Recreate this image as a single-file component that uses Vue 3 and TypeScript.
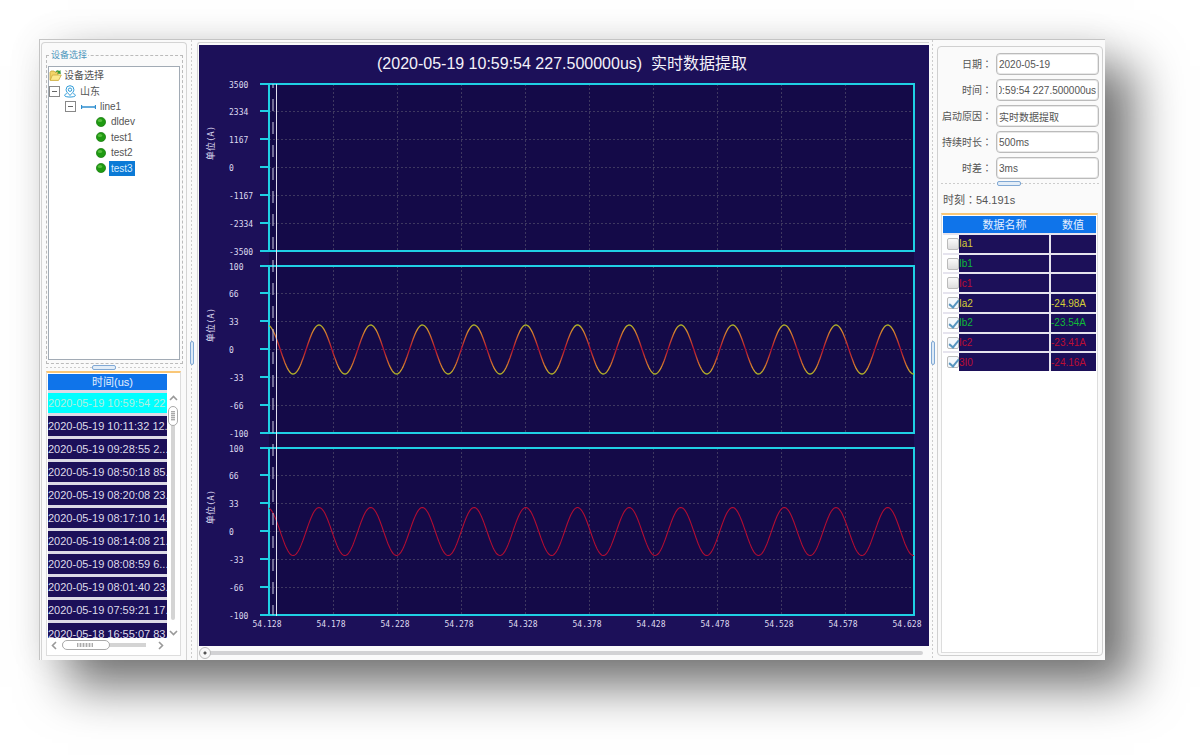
<script setup lang="ts">
import { onMounted, ref } from 'vue'

interface Axis {
  top: number
  labels: string[]
}

interface Channel {
  name: string
  value: string
  on: boolean
  tone: string
}

const devices = ['dldev', 'test1', 'test2', 'test3']
const selectedDevice = ref('test3')

const times = [
  '2020-05-19 10:59:54 22',
  '2020-05-19 10:11:32 12.',
  '2020-05-19 09:28:55 2...',
  '2020-05-19 08:50:18 85.',
  '2020-05-19 08:20:08 23.',
  '2020-05-19 08:17:10 14.',
  '2020-05-19 08:14:08 21.',
  '2020-05-19 08:08:59 6...',
  '2020-05-19 08:01:40 23.',
  '2020-05-19 07:59:21 17.',
  '2020-05-18 16:55:07 83.',
]
const activeTime = ref(0)

const fields = ref([
  { id: 'date', label: '日期', value: '2020-05-19' },
  { id: 'time', label: '时间', value: '10:59:54 227.500000us' },
  { id: 'cause', label: '启动原因', value: '实时数据提取' },
  { id: 'duration', label: '持续时长', value: '500ms' },
  { id: 'offset', label: '时差', value: '3ms' },
])

const channels = ref<Channel[]>([
  { name: 'Ia1', value: '', on: false, tone: 'yellow' },
  { name: 'Ib1', value: '', on: false, tone: 'green' },
  { name: 'Ic1', value: '', on: false, tone: 'red' },
  { name: 'Ia2', value: '-24.98A', on: true, tone: 'yellow' },
  { name: 'Ib2', value: '-23.54A', on: true, tone: 'green' },
  { name: 'Ic2', value: '-23.41A', on: true, tone: 'red' },
  { name: '3I0', value: '-24.16A', on: true, tone: 'red' },
])

const title = '(2020-05-19 10:59:54 227.500000us)  实时数据提取'

const LEFT = 70
const RIGHT = 715
const HEIGHT = 167
const tickOffsets = [0, 27, 55, 83, 111, 139, 167]

const axes: Axis[] = [
  { top: 39, labels: ['3500', '2334', '1167', '0', '-1167', '-2334', '-3500'] },
  { top: 221, labels: ['100', '66', '33', '0', '-33', '-66', '-100'] },
  { top: 403, labels: ['100', '66', '33', '0', '-33', '-66', '-100'] },
]

const gridX = Array.from({ length: 9 }, (_, i) => Math.round(LEFT + (i + 1) * 64) + 0.5)
const xLabels = Array.from({ length: 11 }, (_, i) => ({
  x: 68 + i * 64,
  text: (54.128 + i * 0.05).toFixed(3),
}))

function wave(mid: number, amp: number): string {
  const points: string[] = []
  for (let x = LEFT; x <= RIGHT; x++) {
    const y = mid - amp * Math.cos((2 * Math.PI * (x - 120)) / 51.7)
    points.push(`${x},${y.toFixed(1)}`)
  }
  return points.join(' ')
}

const wave2 = wave(304.5, 24.5)
const wave3 = wave(486.5, 24)
const position = ref(0)

onMounted(() => {
  const el = document.getElementById('time')
  if (el) el.scrollLeft = el.scrollWidth
})
</script>

<template>
  <div class="stage">
    <main class="window">
      <aside class="left">
        <fieldset class="devices">
          <legend>设备选择</legend>
          <div class="tree-box">
            <ul class="tree">
              <li>
                <svg class="ic-folder" width="13" height="13" viewBox="0 0 13 13">
                  <path d="M1 3.5 L2 2 H5 L6 3.2 H9 V11 H1Z" fill="#f2d468" stroke="#c7a437" stroke-width=".8" />
                  <path d="M1.2 11.4 L3.4 6 H12.3 L9.6 11.4Z" fill="#fbe98f" stroke="#cbaa3e" stroke-width=".8" />
                  <path d="M6.3 3.4 C7 1.2 9 .8 10.2 2 L11.4 1 L11.8 5 L8 4.6 L9.2 3.4 C8.4 2.6 7.4 2.8 6.3 3.4Z" fill="#3a9a32" />
                </svg>
                <span>设备选择</span>
              </li>
              <li>
                <span class="fold"></span>
                <svg class="ic-pin" width="12" height="13" viewBox="0 0 12 13" fill="none" stroke="#2f9bd8">
                  <path d="M6 10.4 C3.4 8 2.1 6.3 2.1 4.6 A3.9 3.9 0 0 1 9.9 4.6 C9.9 6.3 8.6 8 6 10.4Z" />
                  <circle cx="6" cy="4.7" r="1.7" />
                  <path d="M2.8 8.6 C1.4 9 .6 9.7 .6 10.4 C.6 12.6 11.4 12.6 11.4 10.4 C11.4 9.7 10.6 9 9.2 8.6" />
                </svg>
                <span>山东</span>
              </li>
              <li class="lv1">
                <span class="fold"></span>
                <svg class="ic-line" width="15" height="6" viewBox="0 0 15 6" stroke="#2f8fd0">
                  <path d="M.5 1 V5 M14.5 1 V5 M.5 3 H14.5" fill="none" stroke-width="1.3" />
                </svg>
                <span>line1</span>
              </li>
              <li v-for="d in devices" :key="d" class="lv2">
                <svg width="10" height="10" viewBox="0 0 10 10">
                  <circle cx="5" cy="5" r="4.6" fill="#1f9a12" stroke="#157a0d" stroke-width=".7" />
                  <ellipse cx="4" cy="3.4" rx="2.2" ry="1.5" fill="#55bd3c" />
                </svg>
                <button type="button" :class="{ picked: d === selectedDevice }" @click="selectedDevice = d">{{ d }}</button>
              </li>
            </ul>
          </div>
        </fieldset>
        <div class="hsplit"><i></i></div>
        <section class="times">
          <div class="times-main">
            <div class="times-view">
              <table>
                <thead>
                  <tr><th>时间(us)</th></tr>
                </thead>
                <tbody>
                  <tr v-for="(t, i) in times" :key="t" :class="{ active: i === activeTime }" @click="activeTime = i">
                    <td>{{ t }}</td>
                  </tr>
                </tbody>
              </table>
            </div>
            <div class="vbar">
              <svg width="9" height="6" viewBox="0 0 9 6"><path d="M1 5 L4.5 1.5 L8 5" fill="none" stroke="#999" stroke-width="1.6" /></svg>
              <div class="vtrack"><i></i></div>
              <svg width="9" height="6" viewBox="0 0 9 6"><path d="M1 1 L4.5 4.5 L8 1" fill="none" stroke="#999" stroke-width="1.6" /></svg>
            </div>
          </div>
          <div class="hbar">
            <svg width="6" height="9" viewBox="0 0 6 9"><path d="M5 1 L1.5 4.5 L5 8" fill="none" stroke="#999" stroke-width="1.6" /></svg>
            <div class="htrack"><i></i></div>
            <svg width="6" height="9" viewBox="0 0 6 9"><path d="M1 1 L4.5 4.5 L1 8" fill="none" stroke="#999" stroke-width="1.6" /></svg>
          </div>
        </section>
      </aside>

      <div class="vsplit"><i></i></div>

      <section class="center">
        <div class="chart">
          <svg viewBox="0 0 730 601">
            <defs>
              <linearGradient id="mix" gradientUnits="userSpaceOnUse" x1="0" y1="280" x2="0" y2="329">
                <stop offset="0" stop-color="#a9b428" />
                <stop offset=".1" stop-color="#d8922c" />
                <stop offset=".3" stop-color="#cc4c2c" />
                <stop offset=".5" stop-color="#b30f30" />
                <stop offset=".7" stop-color="#cc4c2c" />
                <stop offset=".9" stop-color="#d8922c" />
                <stop offset="1" stop-color="#a9b428" />
              </linearGradient>
            </defs>
            <text class="title" x="178" y="24">{{ title }}</text>
            <rect x="70" y="39" width="645" height="531" fill="#140a48" />
            <g v-for="(a, n) in axes" :key="n">
              <g class="grid">
                <path v-for="x in gridX" :key="x" :d="`M${x} ${a.top} V${a.top + HEIGHT}`" />
                <path v-for="t in tickOffsets.slice(1, 6)" :key="t" :d="`M70 ${a.top + t + 0.5} H715`" />
              </g>
              <g class="frame">
                <path :d="`M61 ${a.top} H715 V${a.top + HEIGHT} H61 M70 ${a.top} V${a.top + HEIGHT}`" />
                <path v-for="t in tickOffsets.slice(1, 6)" :key="t" :d="`M61 ${a.top + t} H70`" />
              </g>
              <text v-for="(l, i) in a.labels" :key="i" class="tick" x="30" :y="a.top + (tickOffsets[i] ?? 0) + 4">{{ l }}</text>
              <text class="unit" text-anchor="middle" :transform="`translate(15 ${a.top + 59}) rotate(-90)`">单位(A)</text>
            </g>
            <polyline :points="wave2" fill="none" stroke="url(#mix)" stroke-width="1.3" />
            <polyline :points="wave3" fill="none" stroke="#b00d33" stroke-width="1.1" />
            <path d="M74 39 V570" fill="none" stroke="#cfcbe4" stroke-dasharray="12 11" stroke-dashoffset="8" />
            <path d="M77.5 39 V571" fill="none" stroke="#e2e0f0" />
            <text v-for="l in xLabels" :key="l.text" class="tick" text-anchor="middle" :x="l.x" y="582">{{ l.text }}</text>
          </svg>
        </div>
        <input v-model="position" class="slider" type="range" min="0" max="100" aria-label="position" />
      </section>

      <div class="vsplit narrow"><i></i></div>

      <aside class="right">
        <form class="form" @submit.prevent>
          <template v-for="f in fields" :key="f.id">
            <label :for="f.id">{{ f.label }}<span class="colon">：</span></label>
            <input :id="f.id" v-model="f.value" type="text" />
          </template>
        </form>
        <div class="hsplit"><i></i></div>
        <p class="moment">时刻<span class="colon">：</span>54.191s</p>
        <div class="channels">
          <table>
            <colgroup><col class="c1" /><col /><col class="c3" /></colgroup>
            <thead>
              <tr><th></th><th>数据名称</th><th>数值</th></tr>
            </thead>
            <tbody>
              <tr v-for="c in channels" :key="c.name">
                <td class="check"><input v-model="c.on" type="checkbox" :aria-label="c.name" /></td>
                <td class="name" :class="c.tone">{{ c.name }}</td>
                <td class="value" :class="c.tone">{{ c.value }}</td>
              </tr>
            </tbody>
          </table>
        </div>
      </aside>
    </main>
  </div>
</template>

<style>
body {
  background: #fff;
}
</style>

<style scoped>
* {
  box-sizing: border-box;
}

.stage {
  display: flex;
  height: 100vh;
  min-height: 600px;
  padding: 39px 95px 95px 39px;
  overflow: hidden;
  color: #555;
  font: 10px/15px "Liberation Sans", "Noto Sans CJK SC", sans-serif;
}

.window {
  display: flex;
  flex: 1;
  min-width: 0;
  border-top: 1px solid #c4c4c4;
  border-left: 1px solid #c4c4c4;
  background: #fafafa;
  box-shadow: 29px 27px 46px rgba(0, 0, 0, 0.54), 0 0 36px rgba(0, 0, 0, 0.07);
}

.left {
  display: flex;
  flex-direction: column;
  width: 146px;
  margin: 2px 0 0 1px;
  padding: 5px 3px 4px 4px;
  border: 1px solid #d4d4d4;
  border-bottom: 0;
  border-radius: 4px 4px 0 0;
}

.devices {
  flex: none;
  min-width: 0;
  height: 316px;
  margin: 0;
  padding: 3px 2px 2px 1px;
  border: 1px dashed #bbb;
}

.devices legend {
  height: 15px;
  margin-left: 2px;
  padding: 0 1px;
  color: #4f97bd;
  font-size: 9px;
}

.tree-box {
  height: 294px;
  border: 1px solid #a2abb5;
  background: #fff;
}

.tree {
  display: grid;
  grid-template-rows: repeat(7, 1fr);
  height: 109px;
  margin: 0;
  padding: 1px 0 0;
  list-style: none;
}

.tree li {
  display: flex;
  align-items: center;
  gap: 4px;
}

.tree .ic-folder {
  margin-right: -2px;
}

.tree .lv1 {
  padding-left: 16px;
}

.tree .lv2 {
  gap: 3px;
  padding-left: 47px;
}

.fold {
  position: relative;
  width: 11px;
  height: 11px;
  border: 1px solid #888;
}

.fold::after {
  position: absolute;
  top: 4px;
  left: 2px;
  width: 5px;
  height: 1px;
  background: #666;
  content: "";
}

.lv1 .ic-line {
  margin-left: 1px;
}

.tree button {
  height: 15px;
  padding: 0 2px;
  border: 0;
  background: none;
  color: #555;
  font: inherit;
}

.tree button.picked {
  background: #0b7ad6;
  color: #d5eaff;
}

.hsplit,
.vsplit {
  display: flex;
  flex: none;
  align-items: center;
  justify-content: center;
}

.hsplit {
  height: 7px;
  background: repeating-linear-gradient(90deg, #ccc 0 2px, transparent 2px 4px) 0 50% / 100% 1px no-repeat;
}

.hsplit i {
  width: 24px;
  height: 5px;
  margin-right: 22px;
  border: 1px solid #80a8d4;
  border-radius: 2px;
  background: #e3edf7;
}

.vsplit {
  width: 10px;
  padding-top: 6px;
  background: repeating-linear-gradient(#ccc 0 2px, transparent 2px 4px) 4px 0 / 1px 100% no-repeat;
}

.vsplit i {
  width: 4px;
  height: 24px;
  border: 1px solid #80a8d4;
  border-radius: 2px;
  background: #dce9f6;
}

.vsplit.narrow {
  width: 7px;
  background-position-x: 3px;
}

.times {
  display: flex;
  flex: 1;
  flex-direction: column;
  min-height: 0;
  margin: 0 2px 0 0;
  padding: 1px 1px 3px;
  border: 1px solid #ddd;
  border-top: 2px solid #f9c778;
  background: #fff;
}

.times-main {
  display: flex;
  flex: 1;
  min-height: 0;
}

.times-view {
  flex: 1;
  min-width: 0;
  overflow: hidden;
}

table {
  width: 100%;
  border-collapse: collapse;
  table-layout: fixed;
}

th {
  background: #0f74ea;
  color: #e3efff;
  font-size: 11px;
  font-weight: normal;
}

.times th {
  height: 17px;
  padding: 0 0 0 10px;
  line-height: 16px;
}

.times td {
  height: 23px;
  padding: 0;
  overflow: hidden;
  border-top: 3px solid #dcdae6;
  background: #1c1059;
  color: #dedbea;
  font-size: 11px;
  line-height: 20px;
  white-space: nowrap;
}

.times .active td {
  background: #00ffff;
  color: #b0efe0;
}

.vbar {
  display: flex;
  flex-direction: column;
  align-items: center;
  width: 12px;
  padding: 21px 0 2px;
}

.vtrack {
  flex: 1;
  width: 4px;
  margin: 5px 0 10px;
  border-radius: 2px;
  background: #d4d4d4;
}

.vtrack i {
  display: block;
  width: 10px;
  height: 20px;
  margin-left: -3px;
  border: 1px solid #aaa;
  border-radius: 5px;
  background: repeating-linear-gradient(#aaa 0 1px, #ddd 1px 2px) 50% 50% / 4px 10px no-repeat #fff;
}

.hbar {
  display: flex;
  align-items: center;
  height: 14px;
  margin-right: 12px;
  padding: 0 3px;
}

.htrack {
  display: flex;
  flex: 1;
  align-items: center;
  height: 4px;
  margin: 0 12px 0 5px;
  background: #d4d4d4;
}

.htrack i {
  width: 48px;
  height: 10px;
  border: 1px solid #aaa;
  border-radius: 5px;
  background: repeating-linear-gradient(90deg, #aaa 0 1px, #ddd 1px 3px) 45% 50% / 16px 4px no-repeat #fff;
}

.center {
  display: flex;
  flex: 1;
  flex-direction: column;
  min-width: 0;
  margin-top: 2px;
  padding: 2px 0 0 1px;
  border-top: 1px solid #d4d4d4;
  border-left: 1px solid #d4d4d4;
  border-radius: 3px 0 0;
}

.chart {
  flex: 1;
  min-height: 0;
  background: #1c1059;
}

.chart svg {
  display: block;
  width: 100%;
  height: 100%;
}

.title {
  fill: #f4f2fa;
  font-size: 16px;
  white-space: pre;
}

.tick {
  fill: #dedaf0;
  font-family: "DejaVu Sans Mono", monospace;
  font-size: 8px;
}

.unit {
  fill: #dedaf0;
  font-family: "DejaVu Sans Mono", "Noto Sans CJK SC", monospace;
  font-size: 9px;
}

.grid path {
  fill: none;
  stroke: #3e3860;
  stroke-dasharray: 2 2;
}

.frame path {
  fill: none;
  stroke: #1fd0e4;
  stroke-width: 2;
}

.slider {
  flex: none;
  width: 100%;
  height: 14px;
  margin: 0;
  padding-right: 6px;
  appearance: none;
  background: none;
}

.slider::-webkit-slider-runnable-track {
  height: 4px;
  border-radius: 2px;
  background: #d2d2d4;
}

.slider::-webkit-slider-thumb {
  width: 12px;
  height: 12px;
  margin-top: -4px;
  border: 1px solid #bbb;
  border-radius: 6px;
  appearance: none;
  background: radial-gradient(circle, #555 0 1px, #f8f8f8 2px);
}

.right {
  display: flex;
  flex: none;
  flex-direction: column;
  width: 166px;
  margin: 6px 2px 4px 1px;
  padding: 6px 3px 2px;
  border: 1px solid #d0d0d0;
  border-radius: 4px;
}

.form {
  display: grid;
  grid-template-columns: 51px 1fr;
  gap: 4px;
  align-items: center;
}

.form label {
  text-align: right;
  white-space: nowrap;
}

.colon {
  font-family: "Noto Sans CJK TC", sans-serif;
}

.form input {
  width: 100%;
  min-width: 0;
  height: 22px;
  padding: 0 2px;
  border: 1px solid #bbb;
  border-radius: 4px;
  outline: 0;
  background: #fff;
  box-shadow: inset 0 0 0 1px #e8e8e8;
  color: #555;
  font: inherit;
}

.right .hsplit {
  margin-top: 1px;
}

.moment {
  margin: 5px 2px;
  font-size: 11px;
}

.channels {
  flex: 1;
  margin: 0 1px 0 0;
  padding: 1px;
  border: 1px solid #ddd;
  border-top: 2px solid #f9c778;
  background: #fff;
}

.channels table {
  height: 155px;
}

.channels .c1 {
  width: 16px;
}

.channels .c3 {
  width: 46px;
}

.channels th {
  height: 18px;
  padding: 0;
  line-height: 16px;
}

.channels td {
  padding: 0;
  border-top: 2px solid #e6e4ee;
  line-height: 15px;
}

.name,
.value {
  background: #1c1059;
}

.value {
  border-left: 2px solid #e6e4ee;
}

.check input {
  display: block;
  width: 12px;
  height: 12px;
  margin: 0 0 0 4px;
  border: 1px solid #bbb;
  border-radius: 2px;
  appearance: none;
  background: linear-gradient(#fafafa, #ddd);
}

.check input:checked {
  background: #f4f8fc;
}

.check input:checked::after {
  display: block;
  width: 4px;
  height: 8px;
  margin: 0 0 0 3px;
  border: solid #5795bf;
  border-width: 0 2px 2px 0;
  transform: rotate(40deg);
  content: "";
}

.yellow {
  color: #d4cc36;
}

.green {
  color: #10b838;
}

.red {
  color: #bd0d33;
}
</style>
